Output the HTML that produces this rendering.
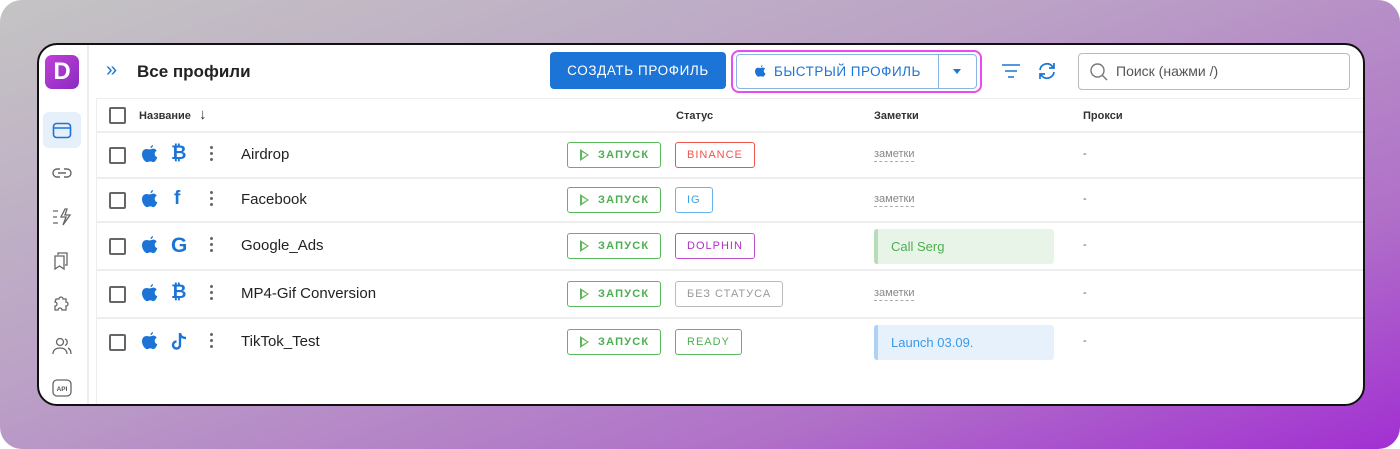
<!DOCTYPE html>
<html><head><meta charset="utf-8"><style>
*{box-sizing:border-box;margin:0;padding:0}
body{width:1400px;height:449px;background:#fff;font-family:"Liberation Sans",Roboto,sans-serif;position:relative;overflow:hidden}
.bg{position:absolute;left:0;top:0;width:1400px;height:449px;border-radius:22px;background:linear-gradient(160deg,#c4c4c4 0%,#bba2c6 40%,#b070c8 75%,#a22fd2 100%)}
.card{position:absolute;left:37px;top:43px;width:1328px;height:363px;background:#fff;border:2px solid #111;border-radius:20px;overflow:hidden}
.side{position:absolute;left:0;top:0;width:50px;height:100%;border-right:2px solid #eee}
.logo{position:absolute;left:6px;top:10px;width:34px;height:34px;border-radius:7px;background:linear-gradient(135deg,#c040d8,#8a2bc0);color:#fff;font-weight:bold;font-size:24px;text-align:center;line-height:34px}
.act{position:absolute;left:4px;top:67px;width:38px;height:36px;border-radius:6px;background:#e6f0fb}
.si{position:absolute;left:13px}
.abs{position:absolute}
.title{left:98px;top:17px;font-size:17px;font-weight:bold;color:#222}
.btn1{left:511px;top:7px;width:176px;height:37px;background:#1b74d6;border-radius:4px;color:#fff;font-size:13.5px;letter-spacing:0.6px;text-align:center;line-height:37px}
.hl{left:692px;top:5px;width:251px;height:43px;border:2px solid #e84cf0;border-radius:8px}
.btn2{left:697px;top:9px;width:241px;height:35px;border:1px solid #8ab4e6;border-radius:4px;color:#1b74d6;font-size:13.5px;letter-spacing:0.5px;line-height:33px}
.srch{left:1039px;top:8px;width:272px;height:37px;border:1px solid #bbb;border-radius:4px;color:#555;font-size:14px;line-height:35px;padding-left:37px}
.tbl{position:absolute;left:57px;top:53px;width:1267px;height:320px;border-left:1px solid #eee;border-top:1px solid #eee}
.row{position:absolute;left:0;width:100%;border-bottom:2px solid #eee}
.cb{position:absolute;left:12px;width:17px;height:17px;border:2px solid #666;border-radius:2px}
.hd{font-size:11px;font-weight:bold;color:#333;position:absolute}
.name{position:absolute;left:144px;font-size:15px;color:#222}
.run{position:absolute;left:470px;width:94px;height:26px;border:1px solid #5cb85c;border-radius:3px;color:#4caf50;font-size:11px;font-weight:bold;letter-spacing:1.2px;line-height:24px;padding-left:30px}
.run:before{content:"";position:absolute;left:12px;top:6px;width:0;height:0;border-left:9px solid #5cb85c;border-top:6px solid transparent;border-bottom:6px solid transparent}
.run:after{content:"";position:absolute;left:13.5px;top:8.5px;border-left:5.5px solid #fff;border-top:3.5px solid transparent;border-bottom:3.5px solid transparent}
.tag{position:absolute;left:578px;height:26px;border:1px solid;border-radius:3px;font-size:11px;letter-spacing:1px;line-height:24px;padding:0 11px}
.note{position:absolute;left:777px;font-size:11px;color:#888;border-bottom:1px dashed #aaa;line-height:13px}
.nbox{position:absolute;left:777px;width:180px;height:35px;border-radius:3px;font-size:13px;line-height:35px;padding-left:13px}
.px{position:absolute;left:986px;font-size:11px;color:#555}
.dots{position:absolute;left:113px;width:4px}
.dots i{display:block;width:3px;height:3px;background:#666;border-radius:50%;margin-bottom:3px}
.ic{position:absolute;left:45px}
.ic2{position:absolute;left:74px;color:#1b74d6;font-weight:bold;font-size:19px}
</style></head><body>
<div class="bg"></div>
<div class="card">
 <div class="side">
  <div class="logo">D</div>
  <div class="act"></div>
  <svg class="si" style="top:77px" width="20" height="17" viewBox="0 0 20 17" fill="none" stroke="#1b74d6" stroke-width="1.6"><rect x="1.5" y="1.5" width="17" height="14" rx="3"/><path d="M1.5 6h17"/></svg>
  <svg class="si" style="top:121px" width="20" height="14" viewBox="0 0 20 14" fill="none" stroke="#666" stroke-width="1.4"><path d="M8 3H5a4 4 0 000 8h3M12 3h3a4 4 0 010 8h-3M6 7h8"/></svg>
  <svg class="si" style="top:162px" width="20" height="20" viewBox="0 0 20 20" fill="none" stroke="#666" stroke-width="1.3"><path d="M1 4h5M1 10h4M1 16h5M13 2l-4 8h5l-3 8 7-10h-5l2-6z"/></svg>
  <svg class="si" style="top:206px" width="18" height="20" viewBox="0 0 18 20" fill="none" stroke="#666" stroke-width="1.3"><path d="M6 4V2h9v12h-2M3 5h9v13l-4.5-3L3 18z"/></svg>
  <svg class="si" style="top:248px" width="20" height="20" viewBox="0 0 20 20" fill="none" stroke="#666" stroke-width="1.3"><path d="M4 6h3a2 2 0 114 0h3v3a2 2 0 110 4v4h-4a2 2 0 10-4 0H3v-4a2 2 0 100-4z"/></svg>
  <svg class="si" style="top:292px" width="20" height="18" viewBox="0 0 20 18" fill="none" stroke="#666" stroke-width="1.3"><circle cx="8" cy="5" r="3.5"/><path d="M1 17c0-4 3-6 7-6s7 2 7 6M13 2a3.5 3.5 0 010 6.5M16 11c2 1 3 3 3 6"/></svg>
  <svg class="si" style="top:334px" width="20" height="18" viewBox="0 0 20 18"><rect x="1" y="1" width="18" height="16" rx="4" fill="none" stroke="#666" stroke-width="1.3"/><text x="10" y="12" font-size="6.5" font-weight="bold" text-anchor="middle" fill="#555" font-family="Liberation Sans">API</text></svg>
 </div>
 <div class="abs" style="left:67px;top:14px;color:#1b74d6;font-size:20px">»</div>
 <div class="abs title">Все профили</div>
 <div class="abs btn1">СОЗДАТЬ ПРОФИЛЬ</div>
 <div class="abs hl"></div>
 <div class="abs btn2"><svg style="position:absolute;left:18px;top:10px" width="11" height="13" viewBox="0 0 11 13"><path fill="#1b74d6" d="M7.5 0c.1 1-.6 2-1.6 2.2C5.8 1.2 6.6.2 7.5 0zM5.5 3c.8 0 1.4-.5 2.2-.5 1 0 1.9.5 2.4 1.3-2 1.1-1.7 3.9.4 4.6-.4 1.3-1.4 3.3-2.6 3.3-.9 0-1-.5-2.2-.5S4.3 11.7 3.4 11.7C2 11.7 0 9 0 6.3 0 3.9 1.6 2.7 3 2.7c.9 0 1.7.3 2.5.3z"/></svg><span style="position:absolute;left:37px">БЫСТРЫЙ ПРОФИЛЬ</span><span style="position:absolute;left:201px;top:0;height:33px;border-left:1px solid #8ab4e6"></span><span style="position:absolute;left:216px;top:14px;border-top:5px solid #1b74d6;border-left:4px solid transparent;border-right:4px solid transparent;width:0;height:0"></span></div>
 <svg class="abs" style="left:962px;top:18px" width="20" height="16" viewBox="0 0 20 16" fill="none" stroke="#1b74d6" stroke-width="1.6"><path d="M1 2h18M4 8h12M7 14h6"/></svg>
 <svg class="abs" style="left:998px;top:16px" width="20" height="20" viewBox="0 0 20 20" fill="none" stroke="#1b74d6" stroke-width="1.7"><path d="M3 9a7 7 0 0112-4l2 2M17 11a7 7 0 01-12 4l-2-2M17 2v5h-5M3 18v-5h5"/></svg>
 <div class="abs srch">Поиск (нажми /)<svg style="position:absolute;left:11px;top:9px" width="18" height="18" viewBox="0 0 18 18" fill="none" stroke="#777" stroke-width="1.4"><circle cx="7.5" cy="7.5" r="6.5"/><path d="M12 12l5 5"/></svg></div>
 <div class="tbl">
  <div class="row" style="top:0;height:34px"><div class="cb" style="top:8px"></div><div class="hd" style="left:42px;top:11px">Название</div><div class="abs" style="left:102px;top:7px;font-size:15px;color:#333">↓</div><div class="hd" style="left:579px;top:11px">Статус</div><div class="hd" style="left:777px;top:11px">Заметки</div><div class="hd" style="left:986px;top:11px">Прокси</div></div>
  <div class="row" style="top:34px;height:46px"><div class="cb" style="top:14px"></div>
   <svg class="ic" style="top:12px" width="16" height="19" viewBox="0 0 11 13"><path fill="#1b74d6" d="M7.5 0c.1 1-.6 2-1.6 2.2C5.8 1.2 6.6.2 7.5 0zM5.5 3c.8 0 1.4-.5 2.2-.5 1 0 1.9.5 2.4 1.3-2 1.1-1.7 3.9.4 4.6-.4 1.3-1.4 3.3-2.6 3.3-.9 0-1-.5-2.2-.5S4.3 11.7 3.4 11.7C2 11.7 0 9 0 6.3 0 3.9 1.6 2.7 3 2.7c.9 0 1.7.3 2.5.3z"/></svg>
   <div class="ic2" style="top:10px">₿</div><div class="dots" style="top:13px"><i></i><i></i><i></i></div>
   <div class="name" style="top:13px">Airdrop</div><div class="run" style="top:9px">ЗАПУСК</div>
   <div class="tag" style="top:9px;color:#f0544c;border-color:#f0544c">BINANCE</div><div class="note" style="top:15px">заметки</div><div class="px" style="top:15px">-</div></div>
  <div class="row" style="top:80px;height:44px"><div class="cb" style="top:13px"></div>
   <svg class="ic" style="top:11px" width="16" height="19" viewBox="0 0 11 13"><path fill="#1b74d6" d="M7.5 0c.1 1-.6 2-1.6 2.2C5.8 1.2 6.6.2 7.5 0zM5.5 3c.8 0 1.4-.5 2.2-.5 1 0 1.9.5 2.4 1.3-2 1.1-1.7 3.9.4 4.6-.4 1.3-1.4 3.3-2.6 3.3-.9 0-1-.5-2.2-.5S4.3 11.7 3.4 11.7C2 11.7 0 9 0 6.3 0 3.9 1.6 2.7 3 2.7c.9 0 1.7.3 2.5.3z"/></svg>
   <div class="ic2" style="top:9px;left:77px">f</div><div class="dots" style="top:12px"><i></i><i></i><i></i></div>
   <div class="name" style="top:12px">Facebook</div><div class="run" style="top:8px">ЗАПУСК</div>
   <div class="tag" style="top:8px;color:#3aa0e8;border-color:#64b4ee">IG</div><div class="note" style="top:14px">заметки</div><div class="px" style="top:14px">-</div></div>
  <div class="row" style="top:124px;height:48px"><div class="cb" style="top:15px"></div>
   <svg class="ic" style="top:13px" width="16" height="19" viewBox="0 0 11 13"><path fill="#1b74d6" d="M7.5 0c.1 1-.6 2-1.6 2.2C5.8 1.2 6.6.2 7.5 0zM5.5 3c.8 0 1.4-.5 2.2-.5 1 0 1.9.5 2.4 1.3-2 1.1-1.7 3.9.4 4.6-.4 1.3-1.4 3.3-2.6 3.3-.9 0-1-.5-2.2-.5S4.3 11.7 3.4 11.7C2 11.7 0 9 0 6.3 0 3.9 1.6 2.7 3 2.7c.9 0 1.7.3 2.5.3z"/></svg>
   <div class="ic2" style="top:11px;font-size:21px">G</div><div class="dots" style="top:14px"><i></i><i></i><i></i></div>
   <div class="name" style="top:14px">Google_Ads</div><div class="run" style="top:10px">ЗАПУСК</div>
   <div class="tag" style="top:10px;color:#b030c0;border-color:#c050d0">DOLPHIN</div>
   <div class="nbox" style="top:6px;background:#e8f4e8;border-left:4px solid #b8dcb8;color:#4caf50">Call Serg</div><div class="px" style="top:16px">-</div></div>
  <div class="row" style="top:172px;height:48px"><div class="cb" style="top:15px"></div>
   <svg class="ic" style="top:13px" width="16" height="19" viewBox="0 0 11 13"><path fill="#1b74d6" d="M7.5 0c.1 1-.6 2-1.6 2.2C5.8 1.2 6.6.2 7.5 0zM5.5 3c.8 0 1.4-.5 2.2-.5 1 0 1.9.5 2.4 1.3-2 1.1-1.7 3.9.4 4.6-.4 1.3-1.4 3.3-2.6 3.3-.9 0-1-.5-2.2-.5S4.3 11.7 3.4 11.7C2 11.7 0 9 0 6.3 0 3.9 1.6 2.7 3 2.7c.9 0 1.7.3 2.5.3z"/></svg>
   <div class="ic2" style="top:11px">₿</div><div class="dots" style="top:14px"><i></i><i></i><i></i></div>
   <div class="name" style="top:14px">MP4-Gif Conversion</div><div class="run" style="top:10px">ЗАПУСК</div>
   <div class="tag" style="top:10px;color:#999;border-color:#bbb">БЕЗ СТАТУСА</div><div class="note" style="top:16px">заметки</div><div class="px" style="top:16px">-</div></div>
  <div class="row" style="top:220px;height:48px;border-bottom:none"><div class="cb" style="top:15px"></div>
   <svg class="ic" style="top:13px" width="16" height="19" viewBox="0 0 11 13"><path fill="#1b74d6" d="M7.5 0c.1 1-.6 2-1.6 2.2C5.8 1.2 6.6.2 7.5 0zM5.5 3c.8 0 1.4-.5 2.2-.5 1 0 1.9.5 2.4 1.3-2 1.1-1.7 3.9.4 4.6-.4 1.3-1.4 3.3-2.6 3.3-.9 0-1-.5-2.2-.5S4.3 11.7 3.4 11.7C2 11.7 0 9 0 6.3 0 3.9 1.6 2.7 3 2.7c.9 0 1.7.3 2.5.3z"/></svg>
   <svg class="ic" style="top:13px;left:74px" width="17" height="19" viewBox="0 0 17 19" fill="none" stroke="#1b74d6" stroke-width="2.4"><path d="M9 1v12a3.5 3.5 0 11-3.5-3.5M9 1c0 3 2.5 5 6 5"/></svg>
   <div class="dots" style="top:14px"><i></i><i></i><i></i></div>
   <div class="name" style="top:14px">TikTok_Test</div><div class="run" style="top:10px">ЗАПУСК</div>
   <div class="tag" style="top:10px;color:#4caf50;border-color:#5cb85c">READY</div>
   <div class="nbox" style="top:6px;background:#e6f1fc;border-left:4px solid #aed2f4;color:#3a9ae8">Launch 03.09.</div><div class="px" style="top:16px">-</div></div>
 </div>
</div>
</body></html>
